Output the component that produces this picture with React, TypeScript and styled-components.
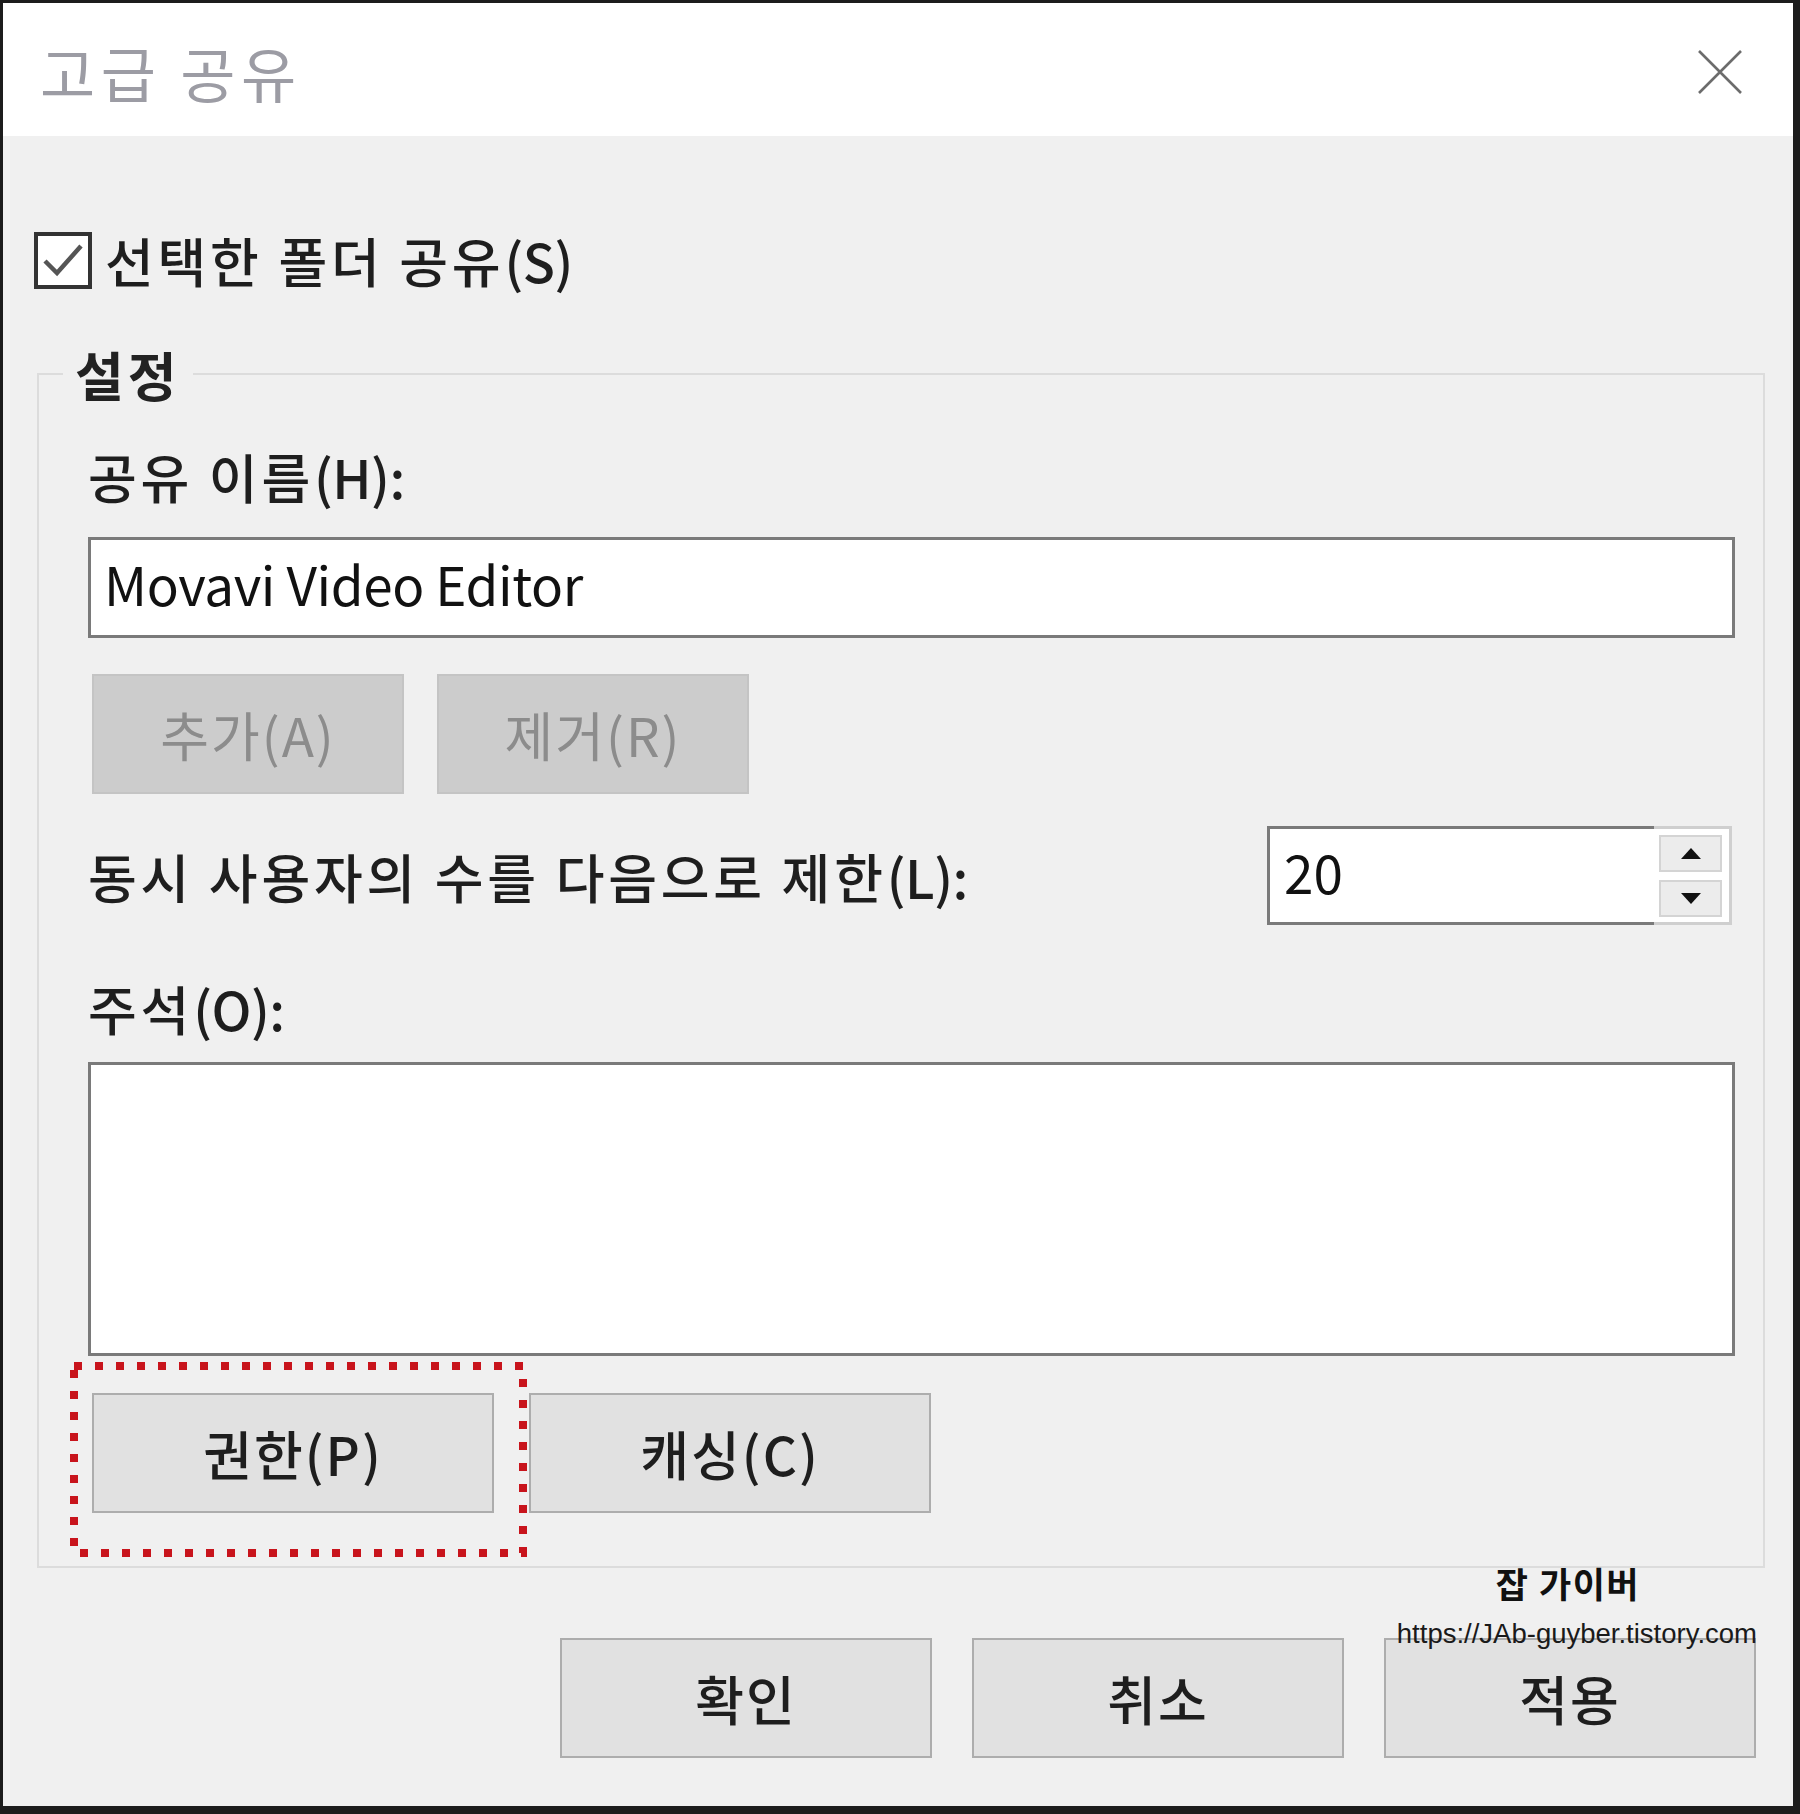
import React from "react";
import styled, { createGlobalStyle } from "styled-components";

const FONT = `"Noto Sans CJK KR", "Noto Sans", sans-serif`;

const Global = createGlobalStyle`
  html, body { margin: 0; padding: 0; }
  body { width: 1800px; height: 1814px; overflow: hidden; background: #1c1c1c; }
  * { box-sizing: border-box; }
`;

const Window = styled.div`
  width: 1800px;
  height: 1814px;
  border-style: solid;
  border-color: #1c1c1c;
  border-width: 3px 7px 8px 3px;
  background: #f0f0f0;
  display: flex;
  flex-direction: column;
  font-family: ${FONT};
  color: #1e1e1e;
`;

const TitleBar = styled.div`
  height: 133px;
  flex: none;
  background: #ffffff;
  display: flex;
  align-items: center;
  justify-content: space-between;
  padding: 4px 51px 0 37px;
`;

const Title = styled.div`
  font-size: 60px;
  line-height: 72px;
  font-weight: 400;
  letter-spacing: 5.5px;
  color: #9c9ca4;
`;

const CloseIcon = () => (
  <svg width="44" height="44" viewBox="0 0 44 44" style={{ display: "block" }}>
    <path d="M1 1 L43 43 M43 1 L1 43" stroke="#6c6c6c" strokeWidth="2.6" fill="none" />
  </svg>
);

const Body = styled.div`
  flex: 1;
  display: flex;
  flex-direction: column;
  padding: 0 28px 0 31px;
`;

const CheckRow = styled.div`
  margin-top: 92px;
  display: flex;
  align-items: center;
  gap: 13px;
`;

const CheckBox = styled.div`
  width: 58px;
  height: 57px;
  border: 4px solid #333;
  background: #fff;
  display: flex;
  align-items: center;
  justify-content: center;
`;

const Label = styled.div<{ $weight?: number }>`
  font-size: 53px;
  line-height: 64px;
  font-weight: ${(p) => p.$weight ?? 500};
  letter-spacing: 3.8px;
  color: #1e1e1e;
  white-space: nowrap;
`;

/* accelerator-key part of a label, e.g. "(H):" */
const Key = styled.span`
  letter-spacing: -0.5px;
`;

const Group = styled.fieldset`
  margin: 50px 0 0 3px;
  padding: 0;
  min-width: 0;
  border: 2px solid #dcdcdc;
`;

const Legend = styled.legend`
  margin-left: 24px;
  padding: 0 12px;
  font-size: 53px;
  line-height: 64px;
  font-weight: 700;
  letter-spacing: 4px;
  color: #222;
`;

const GroupBody = styled.div`
  display: flex;
  flex-direction: column;
  padding: 38px 28px 53px 49px;
`;

const TextBox = styled.div<{ $mt: number; $h: number }>`
  margin-top: ${(p) => p.$mt}px;
  height: ${(p) => p.$h}px;
  border: 3px solid #7a7a7a;
  background: #fff;
  padding: 0 0 10px 13px;
  display: flex;
  align-items: center;
  font-size: 53px;
  font-weight: 400;
  letter-spacing: -0.4px;
  color: #111;
`;

const ButtonRow = styled.div<{ $mt: number; $gap: number }>`
  margin-top: ${(p) => p.$mt}px;
  display: flex;
  gap: ${(p) => p.$gap}px;
  padding-left: 4px;
`;

const Button = styled.div<{ $w: number; $disabled?: boolean }>`
  width: ${(p) => p.$w}px;
  height: 120px;
  flex: none;
  background: ${(p) => (p.$disabled ? "#cccccc" : "#e1e1e1")};
  border: 2px solid ${(p) => (p.$disabled ? "#c4c4c4" : "#adadad")};
  display: flex;
  align-items: center;
  justify-content: center;
  font-size: 53px;
  font-weight: ${(p) => (p.$disabled ? 400 : 500)};
  letter-spacing: 2px;
  color: ${(p) => (p.$disabled ? "#8c8c8c" : "#1e1e1e")};
  white-space: nowrap;
`;

const LimitRow = styled.div`
  margin-top: 32px;
  display: flex;
  align-items: center;
  justify-content: space-between;
`;

const Spin = styled.div`
  width: 465px;
  height: 99px;
  margin-right: 3px;
  display: flex;
`;

const SpinField = styled.div`
  flex: 1;
  border: 3px solid #7a7a7a;
  border-right: none;
  background: #fff;
  padding: 0 0 10px 14px;
  display: flex;
  align-items: center;
  font-size: 53px;
  font-weight: 400;
  color: #111;
`;

const SpinButtons = styled.div`
  width: 78px;
  border: 3px solid #cfcfcf;
  border-left: none;
  background: #fff;
  padding: 6px 7px 5px 5px;
  display: flex;
  flex-direction: column;
  gap: 8px;
`;

const SpinButton = styled.div`
  flex: 1;
  background: #ececec;
  border: 2px solid #d4d4d4;
  display: flex;
  align-items: center;
  justify-content: center;
`;

const Arrow = ({ up }: { up?: boolean }) => (
  <svg width="20" height="11" viewBox="0 0 20 11" style={{ display: "block" }}>
    <path d={up ? "M10 0 L20 11 L0 11 Z" : "M0 0 L20 0 L10 11 Z"} fill="#111" />
  </svg>
);

const MemoLabel = styled(Label)`
  margin-top: 51px;
`;

const Highlight = styled.div`
  position: relative;
`;

const DottedFrame = styled.svg`
  position: absolute;
  left: -22px;
  top: -31px;
  width: 457px;
  height: 195px;
  pointer-events: none;
`;

const Footer = styled.div`
  position: relative;
  margin-top: 70px;
  display: flex;
  justify-content: flex-end;
  gap: 40px;
  padding-right: 9px;
`;

const Watermark = styled.div`
  position: absolute;
  right: 8px;
  top: -76px;
  display: flex;
  flex-direction: column;
  align-items: center;
  z-index: 2;
`;

const MarkTitle = styled.div`
  font-family: ${FONT};
  font-size: 35px;
  line-height: 41px;
  font-weight: 700;
  letter-spacing: 1.5px;
  color: #111;
  padding-right: 18px;
`;

const MarkUrl = styled.div`
  margin-top: 16px;
  font-family: "Liberation Sans", Arial, sans-serif;
  font-size: 27.5px;
  line-height: 30px;
  color: #1a1a1a;
  white-space: nowrap;
`;

export default function App() {
  return (
    <>
      <Global />
      <Window>
        <TitleBar>
          <Title>고급 공유</Title>
          <CloseIcon />
        </TitleBar>
        <Body>
          <CheckRow>
            <CheckBox>
              <svg width="44" height="40" viewBox="0 0 44 40" style={{ display: "block" }}>
                <path d="M4 21 L16 33 L40 6" stroke="#555" strokeWidth="4.5" fill="none" />
              </svg>
            </CheckBox>
            <Label>
              선택한 폴더 공유<Key>(S)</Key>
            </Label>
          </CheckRow>

          <Group>
            <Legend>설정</Legend>
            <GroupBody>
              <Label>
                공유 이름<Key>(H):</Key>
              </Label>
              <TextBox $mt={29} $h={101}>Movavi Video Editor</TextBox>
              <ButtonRow $mt={36} $gap={33}>
                <Button $w={312} $disabled>추가(A)</Button>
                <Button $w={312} $disabled>제거(R)</Button>
              </ButtonRow>
              <LimitRow>
                <Label>
                  동시 사용자의 수를 다음으로 제한<Key>(L):</Key>
                </Label>
                <Spin>
                  <SpinField>20</SpinField>
                  <SpinButtons>
                    <SpinButton><Arrow up /></SpinButton>
                    <SpinButton><Arrow /></SpinButton>
                  </SpinButtons>
                </Spin>
              </LimitRow>
              <MemoLabel>
                주석<Key>(O):</Key>
              </MemoLabel>
              <TextBox $mt={22} $h={294} />
              <ButtonRow $mt={37} $gap={35}>
                <Highlight>
                  <Button $w={402}>권한(P)</Button>
                  <DottedFrame viewBox="0 0 457 195">
                    <rect
                      x="4"
                      y="4"
                      width="449"
                      height="187"
                      fill="none"
                      stroke="#c8141c"
                      strokeWidth="8"
                      strokeDasharray="8 13"
                    />
                  </DottedFrame>
                </Highlight>
                <Button $w={402}>캐싱(C)</Button>
              </ButtonRow>
            </GroupBody>
          </Group>

          <Footer>
            <Button $w={372}>확인</Button>
            <Button $w={372}>취소</Button>
            <Button $w={372}>적용</Button>
            <Watermark>
              <MarkTitle>잡 가이버</MarkTitle>
              <MarkUrl>https://JAb-guyber.tistory.com</MarkUrl>
            </Watermark>
          </Footer>
        </Body>
      </Window>
    </>
  );
}
